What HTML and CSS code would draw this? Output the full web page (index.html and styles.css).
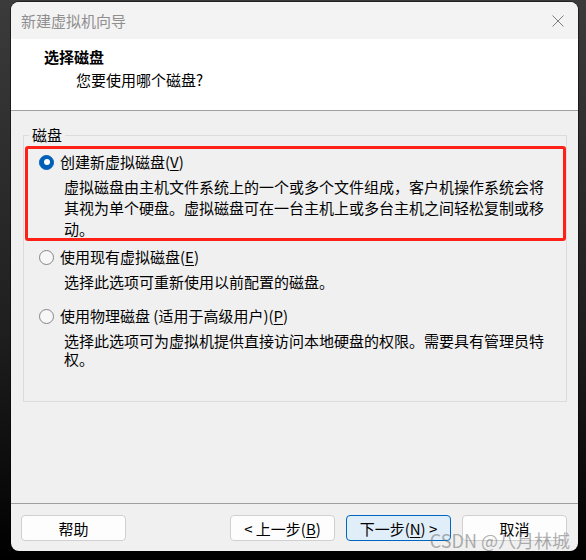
FILE: index.html
```html
<!DOCTYPE html>
<html lang="zh-CN">
<head>
    <meta charset="UTF-8">
    <meta name="viewport" content="width=device-width, initial-scale=1.0">
    <title>新建虚拟机向导</title>
    <link rel="stylesheet" href="styles.css">
</head>
<body>
    <div class="window">
        <div class="titlebar">
            <span class="title">新建虚拟机向导</span>
            <svg class="close" width="12" height="12" viewBox="0 0 12 12">
                <path d="M0.5 0.5 L11.5 11.5 M11.5 0.5 L0.5 11.5" stroke="#7d7d7d" stroke-width="1" fill="none"/>
            </svg>
        </div>

        <!-- 页面标题 -->
        <div class="header">
            <h1>选择磁盘</h1>
            <p>您要使用哪个磁盘?</p>
        </div>

        <div class="content">
            <fieldset class="group">
                <legend>磁盘</legend>

                <div class="opt marked">
                    <div class="opt-row">
                        <span class="radio on"></span>
                        <span>创建新虚拟磁盘(<u>V</u>)</span>
                    </div>
                    <p class="opt-desc">虚拟磁盘由主机文件系统上的一个或多个文件组成，客户机操作系统会将其视为单个硬盘。虚拟磁盘可在一台主机上或多台主机之间轻松复制或移动。</p>
                </div>

                <div class="opt">
                    <div class="opt-row">
                        <span class="radio"></span>
                        <span>使用现有虚拟磁盘(<u>E</u>)</span>
                    </div>
                    <p class="opt-desc">选择此选项可重新使用以前配置的磁盘。</p>
                </div>

                <div class="opt">
                    <div class="opt-row">
                        <span class="radio"></span>
                        <span>使用物理磁盘 (适用于高级用户)(<u>P</u>)</span>
                    </div>
                    <p class="opt-desc">选择此选项可为虚拟机提供直接访问本地硬盘的权限。需要具有管理员特权。</p>
                </div>
            </fieldset>
        </div>

        <div class="footer">
            <button class="btn">帮助</button>
            <div class="nav">
                <button class="btn">&lt; 上一步(<u>B</u>)</button>
                <button class="btn primary">下一步(<u>N</u>) &gt;</button>
                <button class="btn cancel">取消</button>
            </div>
        </div>

        <div class="watermark">CSDN @八月林城</div>
    </div>
</body>
</html>
```

FILE: styles.css
```css
body {
    margin: 0;
    height: 560px;
    overflow: hidden;
    background: linear-gradient(#3b3b3b, #1e1e1e 60%, #000);
    font-family: "Noto Sans CJK SC", "Noto Sans", sans-serif;
    font-size: 15px;
    color: #000;
}

.window {
    position: relative;
    margin: 2px 0 0 11px;
    width: 567px;
    height: 549px;
    display: flex;
    flex-direction: column;
    background-color: #f0f0f0;
    border-radius: 8px;
    overflow: hidden;
    box-shadow: 0 0 0 1px rgba(0, 0, 0, 0.45);
}

/* 标题栏 */
.titlebar {
    height: 37px;
    flex-shrink: 0;
    display: flex;
    align-items: center;
    justify-content: space-between;
    padding: 0 14px 0 10px;
    background-color: #f3f3f3;
}

.title {
    color: #8f8f8f;
    line-height: 20px;
}

/* 页面标题 */
.header {
    height: 72px;
    flex-shrink: 0;
    box-sizing: border-box;
    padding: 8px 0 0 33px;
    background-color: #fff;
    border-bottom: 1px solid #a0a0a0;
}

.header h1 {
    margin: 0 0 3px;
    font-size: 15px;
    font-weight: 700;
    line-height: 20px;
}

.header p {
    margin: 0 0 0 32px;
    line-height: 20px;
}

.content {
    flex: 1;
    padding-top: 14px;
}

/* 分组框 */
.group {
    margin: 0 11px 0 12px;
    padding: 7px 0 33px 0;
    border: 1px solid #dcdcdc;
    min-width: 0;
}

.group legend {
    margin-left: 5px;
    padding: 0 3px;
    line-height: 20px;
}

.opt {
    position: relative;
    padding-left: 15px;
}

.opt + .opt {
    margin-top: 15px;
}

.opt.marked + .opt {
    margin-top: 8px;
}

/* 红色标注框 */
.opt.marked::after {
    content: "";
    position: absolute;
    top: -6px;
    bottom: -2px;
    left: 1px;
    right: 0;
    border: 3px solid #ff2018;
    border-radius: 3px;
    pointer-events: none;
}

.opt-row {
    display: flex;
    align-items: center;
    gap: 6px;
    line-height: 20px;
}

.opt-row u,
.btn u {
    text-decoration-thickness: 1px;
    text-underline-offset: 2px;
}

.radio {
    width: 13px;
    height: 13px;
    border: 1px solid #858585;
    border-radius: 50%;
    background-color: #f7f7f7;
    position: relative;
    flex-shrink: 0;
}

.radio.on {
    background-color: #005fb8;
    border-color: #005fb8;
}

.radio.on::after {
    content: "";
    position: absolute;
    top: 3.5px;
    left: 3.5px;
    width: 6px;
    height: 6px;
    border-radius: 50%;
    background-color: #fff;
}

.opt-desc {
    margin: 6px 0 0 25px;
    width: 484px;
    line-height: 18px;
}

.opt.marked .opt-desc {
    margin-top: 4px;
    line-height: 21px;
}

/* 底部按钮 */
.footer {
    height: 48px;
    flex-shrink: 0;
    box-sizing: border-box;
    display: flex;
    justify-content: space-between;
    padding: 11px 11px 10px 10px;
    border-top: 1px solid #a0a0a0;
}

.nav {
    display: flex;
    gap: 11px;
}

.btn {
    width: 105px;
    height: 26px;
    padding: 0;
    font-family: inherit;
    font-size: 15px;
    color: #000;
    background-color: #fdfdfd;
    border: 1px solid #d0d0d0;
    border-radius: 4px;
}

.btn.primary {
    background-color: #e0eef9;
    border-color: #0067c0;
}

.watermark {
    position: absolute;
    right: 8px;
    bottom: 1px;
    font-size: 18px;
    line-height: 20px;
    color: rgba(110, 110, 110, 0.55);
    pointer-events: none;
}
```
